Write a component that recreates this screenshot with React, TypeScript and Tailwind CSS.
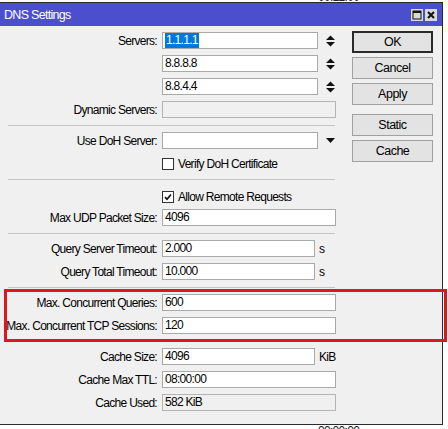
import React from "react";

type FieldProps = {
  label: string;
  value?: string;
  box: string;
  disabled?: boolean;
  selected?: boolean;
  after?: React.ReactNode;
  className?: string;
};

function SortArrows() {
  return (
    <svg width="9" height="12" viewBox="0 0 9 12" className="ml-[8px] shrink-0">
      <path d="M0 5 L4.5 0.5 L9 5 Z" fill="#111" />
      <path d="M0 7 L4.5 11.5 L9 7 Z" fill="#111" />
    </svg>
  );
}

function DropArrow() {
  return (
    <svg width="9" height="5" viewBox="0 0 9 5" className="ml-[8px] shrink-0">
      <path d="M0 0 L9 0 L4.5 5 Z" fill="#111" />
    </svg>
  );
}

function Field({ label, value, box, disabled, selected, after, className = "" }: FieldProps) {
  return (
    <div className={`flex items-center h-[17px] ${className}`}>
      <div className="w-[162px] shrink-0 pr-[5px] text-right whitespace-nowrap">{label}</div>
      <div
        className={`${box} h-[17px] shrink-0 border flex items-center pl-[2px] leading-[15px] whitespace-nowrap ${
          disabled ? "bg-[#f0f0f0] border-[#b4b4b4]" : "bg-white border-[#a9a9a9]"
        }`}
      >
        {selected ? (
          <span className="bg-[#0078d7] text-white px-[1px]">{value}</span>
        ) : (
          <span>{value}</span>
        )}
      </div>
      {after}
    </div>
  );
}

function Check({ label, checked, className = "" }: { label: string; checked?: boolean; className?: string }) {
  return (
    <div className={`flex items-center h-[13px] pl-[162px] ${className}`}>
      <div className="w-[12px] h-[12px] border border-[#333] bg-white flex items-center justify-center shrink-0">
        {checked && (
          <svg width="8" height="8" viewBox="0 0 8 8">
            <path d="M1 4.2 L3 6.3 L7 1.5" stroke="#111" strokeWidth="1.7" fill="none" />
          </svg>
        )}
      </div>
      <span className="ml-[4px] whitespace-nowrap">{label}</span>
    </div>
  );
}

function Sep({ className = "" }: { className?: string }) {
  return <div className={`ml-[8px] w-[327px] h-px bg-[#c4c4c4] ${className}`} />;
}

function Btn({ children, primary, className = "" }: { children: React.ReactNode; primary?: boolean; className?: string }) {
  return (
    <div
      className={`w-[81px] h-[22px] flex items-center justify-center bg-[#e3e3e3] text-[12.5px] tracking-[-0.5px] ${
        primary ? "border-2 border-[#2a2a2a]" : "border border-[#a0a0a0]"
      } ${className}`}
    >
      {children}
    </div>
  );
}

const Unit = ({ text }: { text: string }) => <span className="ml-[4px] whitespace-nowrap">{text}</span>;

export default function App() {
  return (
    <div className="relative w-[448px] h-[429px] bg-white overflow-hidden text-black text-[12px] tracking-[-0.7px] font-['Liberation_Sans',Arial,sans-serif]">
      {/* clock text from the list behind the dialog, cut off at the top */}
      <div className="h-[2px] overflow-hidden relative">
        <div className="absolute left-[318px] top-[-9px] leading-[12px] text-[#222]">00:12:00</div>
      </div>

      <div className="w-[443px] h-[423px] border-t border-r border-b border-[#2b2b2b] bg-[#f0f0f0] flex flex-col">
        {/* title bar */}
        <div className="h-[23px] bg-[#4b4fce] flex items-center pl-[4px] pr-[5px] shrink-0">
          <span className="text-white text-[12.5px] tracking-[-0.7px] leading-none mt-[1px]">DNS Settings</span>
          <div className="ml-auto flex gap-[2px]">
            <div className="w-[12px] h-[12px] bg-[#d9d9d9] flex items-center justify-center">
              <svg width="10" height="10" viewBox="0 0 10 10">
                <rect x="1" y="1" width="8" height="8" fill="none" stroke="#111" strokeWidth="1" />
                <rect x="1" y="1" width="8" height="2" fill="#111" />
              </svg>
            </div>
            <div className="w-[12px] h-[12px] bg-[#d9d9d9] flex items-center justify-center">
              <svg width="10" height="10" viewBox="0 0 10 10">
                <path d="M2 2 L8 8 M8 2 L2 8" stroke="#111" strokeWidth="2" />
              </svg>
            </div>
          </div>
        </div>

        <div className="flex">
          {/* form column */}
          <div className="w-[345px] flex flex-col">
            <Field className="mt-[6px]" label="Servers:" value="1.1.1.1" selected box="w-[156px]" after={<SortArrows />} />
            <Field className="mt-[6px]" label="" value="8.8.8.8" box="w-[156px]" after={<SortArrows />} />
            <Field className="mt-[6px]" label="" value="8.8.4.4" box="w-[156px]" after={<SortArrows />} />
            <Field className="mt-[6px]" label="Dynamic Servers:" value="" disabled box="w-[174px]" />
            <Sep className="mt-[7px]" />
            <Field className="mt-[6px]" label="Use DoH Server:" value="" box="w-[156px]" after={<DropArrow />} />
            <Check className="mt-[8px]" label="Verify DoH Certificate" />
            <Sep className="mt-[9px]" />
            <Check className="mt-[10px]" label="Allow Remote Requests" checked />
            <Field className="mt-[6px]" label="Max UDP Packet Size:" value="4096" box="w-[174px]" />
            <Sep className="mt-[7px]" />
            <Field className="mt-[6px]" label="Query Server Timeout:" value="2.000" box="w-[153px]" after={<Unit text="s" />} />
            <Field className="mt-[6px]" label="Query Total Timeout:" value="10.000" box="w-[153px]" after={<Unit text="s" />} />
            <Sep className="mt-[7px]" />
            <Field className="mt-[6px]" label="Max. Concurrent Queries:" value="600" box="w-[174px]" />
            <Field className="mt-[6px]" label="Max. Concurrent TCP Sessions:" value="120" box="w-[174px]" />
            <Field className="mt-[14px]" label="Cache Size:" value="4096" box="w-[153px]" after={<Unit text="KiB" />} />
            <Field className="mt-[6px]" label="Cache Max TTL:" value="08:00:00" box="w-[174px]" />
            <Field className="mt-[6px]" label="Cache Used:" value="582 KiB" disabled box="w-[174px]" />
          </div>

          {/* button column */}
          <div className="ml-[7px] mt-[5px] flex flex-col">
            <Btn primary>OK</Btn>
            <Btn className="mt-[4px]">Cancel</Btn>
            <Btn className="mt-[4px]">Apply</Btn>
            <Btn className="mt-[9px]">Static</Btn>
            <Btn className="mt-[4px]">Cache</Btn>
          </div>
        </div>
      </div>

      {/* clock text from the list behind the dialog, cut off at the bottom */}
      <div className="relative h-[4px] overflow-hidden">
        <div className="absolute left-[318px] top-[0px] leading-[12px] text-[#222]">00:00:00</div>
      </div>

      {/* red highlight frame drawn over the dialog */}
      <div className="absolute left-[4px] top-[289px] w-[443px] h-[53px] border-[3px] border-[#e0161b] pointer-events-none" />
    </div>
  );
}
